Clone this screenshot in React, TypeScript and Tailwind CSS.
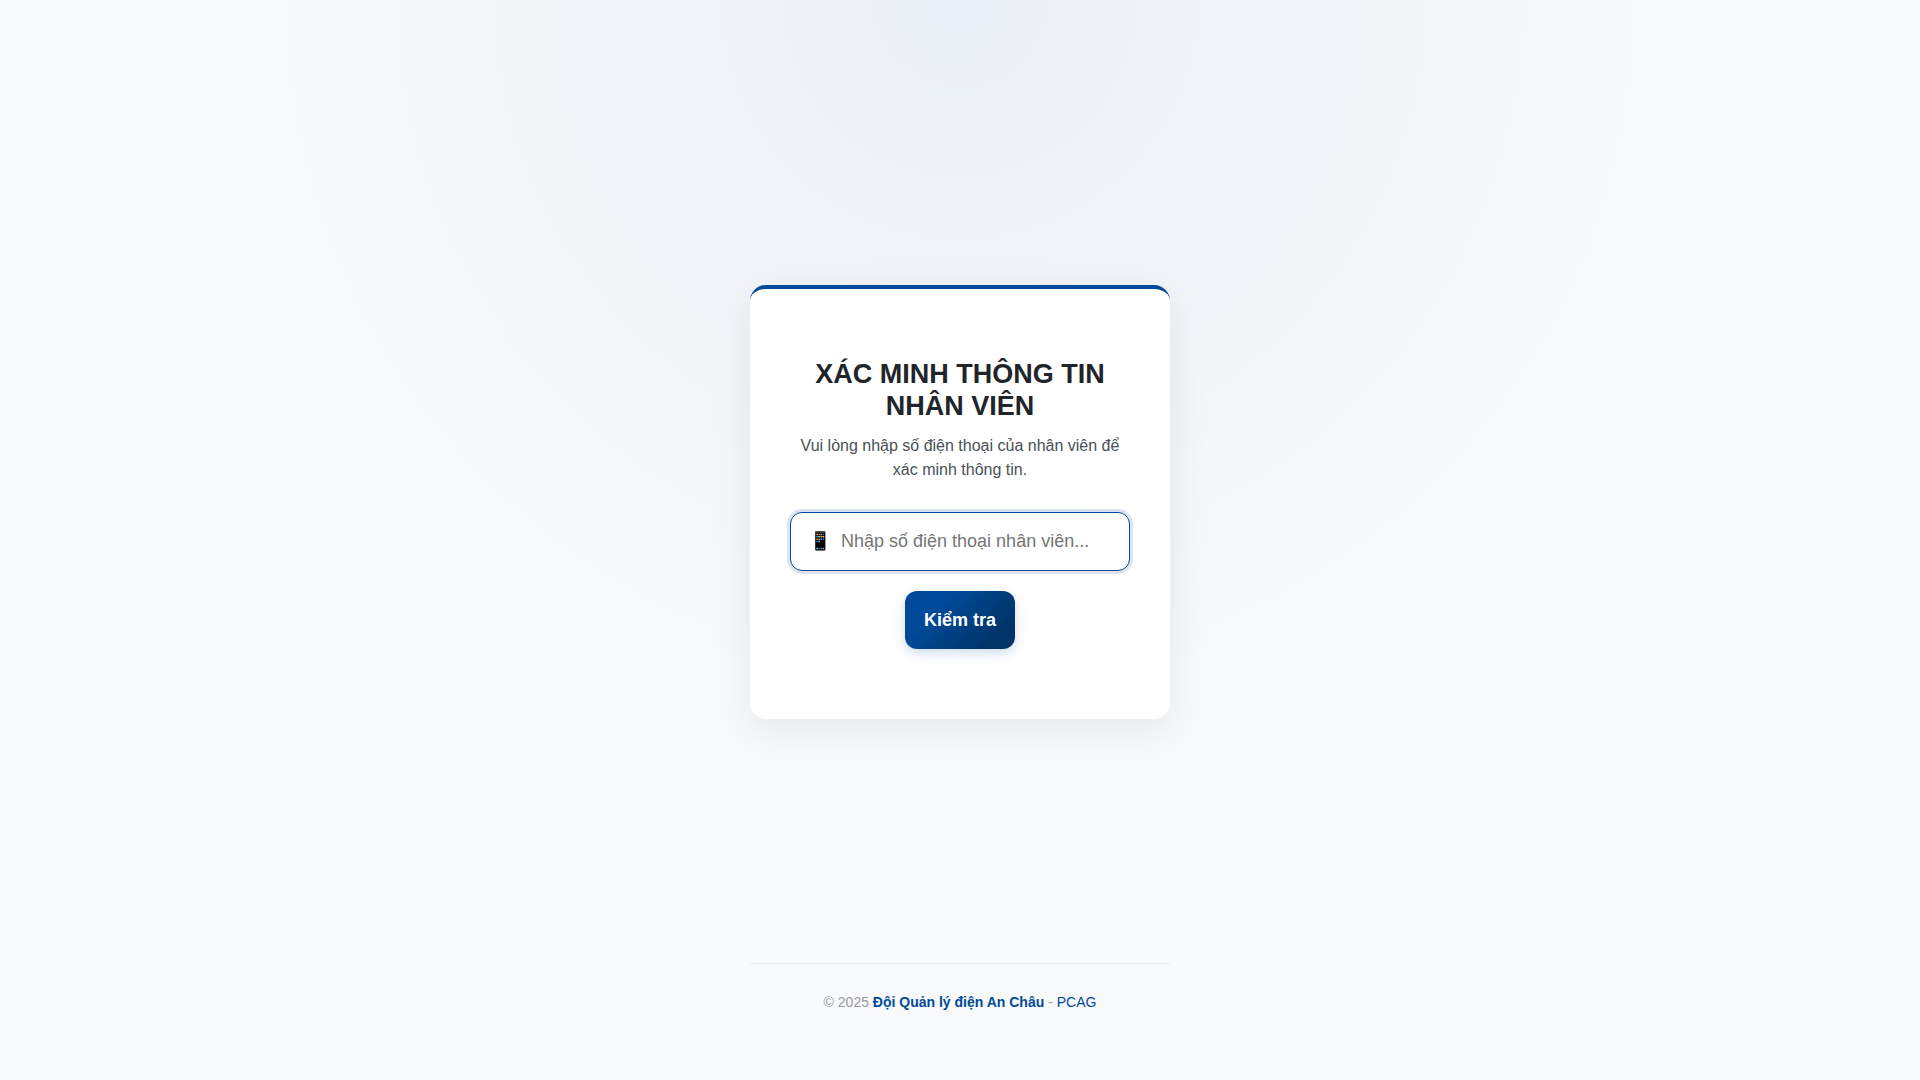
import { useState } from "react";

export default function App() {
  const [phone, setPhone] = useState("");

  return (
    <div className="flex min-h-screen flex-col items-center bg-[#f8f9fb] bg-[radial-gradient(circle_at_50%_0%,rgba(0,74,153,0.05)_0%,transparent_50%)] px-5 py-10 font-['Liberation_Sans',Arial,sans-serif] text-[#212529]">
      <main className="flex w-full max-w-[420px] grow flex-col justify-center">
        <section className="rounded-2xl border-t-4 border-[#004a99] bg-white px-10 pt-[69px] pb-[70px] text-center shadow-[0_10px_40px_rgba(0,0,0,0.08)]">
          <h1 className="mb-3 text-[27px] leading-8 font-bold">XÁC MINH THÔNG TIN NHÂN VIÊN</h1>
          <p className="mb-[30px] text-base text-[#495057]">
            Vui lòng nhập số điện thoại của nhân viên để xác minh thông tin.
          </p>
          <form className="flex flex-col items-center gap-5" onSubmit={(e) => e.preventDefault()}>
            <label className="flex w-full items-center gap-[10px] rounded-xl border border-[#004a99] bg-white px-[18px] py-4 shadow-[0_0_0_3px_rgba(0,74,153,0.15)]">
              <span className="text-lg leading-[25px]" aria-hidden="true">📱</span>
              <input
                type="tel"
                aria-label="Số điện thoại nhân viên"
                value={phone}
                onChange={(e) => setPhone(e.target.value)}
                placeholder="Nhập số điện thoại nhân viên..."
                className="min-w-0 flex-1 bg-transparent text-lg leading-[25px] outline-none placeholder:text-[#757575]"
              />
            </label>
            <button
              type="submit"
              className="rounded-xl bg-[linear-gradient(135deg,#004a99_30%,#003366_85%)] px-[19px] py-4 text-lg leading-[26px] font-bold text-white shadow-[0_4px_12px_rgba(0,74,153,0.2)]"
            >
              Kiểm tra
            </button>
          </form>
        </section>
      </main>
      <footer className="w-full max-w-[420px] border-t border-[#e9ecef] py-7 text-center text-sm leading-5 text-[#94999e]">
        © 2025 <strong className="text-[#004a99]">Đội Quản lý điện An Châu</strong> -{" "}
        <a href="#" className="text-[#004a99]">PCAG</a>
      </footer>
    </div>
  );
}
